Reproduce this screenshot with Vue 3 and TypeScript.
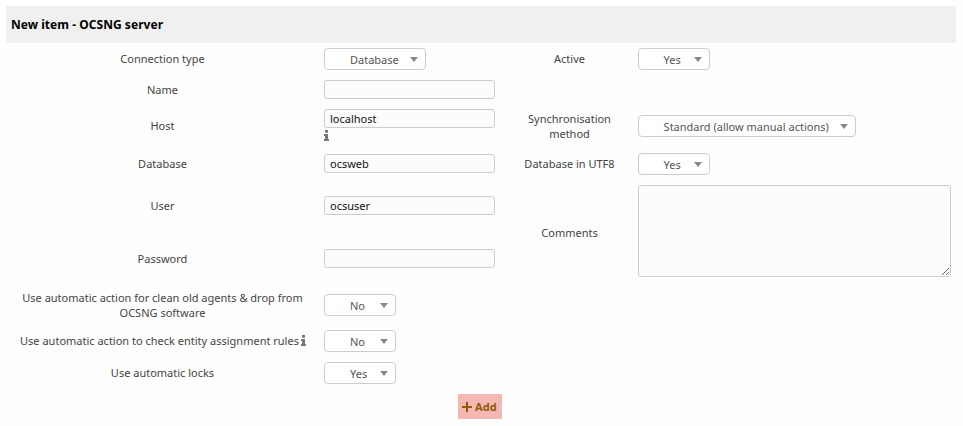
<script setup lang="ts">
import { reactive } from 'vue'

interface Field {
  key: string
  label: string
  kind: 'select' | 'text' | 'area'
  area: string
  size?: 'small' | 'medium' | 'large'
  labelInfo?: boolean
  fieldInfo?: boolean
}

const fields: Field[] = [
  { key: 'connection', label: 'Connection type', kind: 'select', area: 'r1-left', size: 'medium' },
  { key: 'active', label: 'Active', kind: 'select', area: 'r1-right', size: 'small' },
  { key: 'name', label: 'Name', kind: 'text', area: 'r2-left' },
  { key: 'host', label: 'Host', kind: 'text', area: 'r3-left', fieldInfo: true },
  { key: 'sync', label: 'Synchronisation method', kind: 'select', area: 'r3-right', size: 'large' },
  { key: 'database', label: 'Database', kind: 'text', area: 'r4-left' },
  { key: 'utf8', label: 'Database in UTF8', kind: 'select', area: 'r4-right', size: 'small' },
  { key: 'user', label: 'User', kind: 'text', area: 'r5-left' },
  { key: 'comments', label: 'Comments', kind: 'area', area: 'r5-right' },
  { key: 'password', label: 'Password', kind: 'text', area: 'r6-left' },
  { key: 'clean', label: 'Use automatic action for clean old agents & drop from OCSNG software', kind: 'select', area: 'r7-left', size: 'small' },
  { key: 'entity', label: 'Use automatic action to check entity assignment rules', kind: 'select', area: 'r8-left', size: 'small', labelInfo: true },
  { key: 'locks', label: 'Use automatic locks', kind: 'select', area: 'r9-left', size: 'small' },
]

const values = reactive<Record<string, string>>({
  connection: 'Database',
  active: 'Yes',
  name: '',
  host: 'localhost',
  sync: 'Standard (allow manual actions)',
  database: 'ocsweb',
  utf8: 'Yes',
  user: 'ocsuser',
  comments: '',
  password: '',
  clean: 'No',
  entity: 'No',
  locks: 'Yes',
})
</script>

<template>
  <form class="server-form" @submit.prevent>
    <h1 class="title">New item - OCSNG server</h1>
    <div class="fields">
      <div v-for="f in fields" :key="f.key" class="pair" :class="f.area">
        <label class="label">
          <span>{{ f.label }}<svg v-if="f.labelInfo" class="info inline" viewBox="0 0 5 11"><path d="M1 0h3v2.8H1zM0 4h4v5h1v2H0V9h1V6H0z" /></svg></span>
        </label>
        <div class="control">
          <button v-if="f.kind === 'select'" type="button" class="select" :class="f.size">
            <span>{{ values[f.key] }}</span>
            <svg class="arrow" viewBox="0 0 8 5"><path d="M0 0h8L4 5z" /></svg>
          </button>
          <textarea v-else-if="f.kind === 'area'" v-model="values[f.key]" class="comments"></textarea>
          <input v-else v-model="values[f.key]" class="input" type="text" />
          <svg v-if="f.fieldInfo" class="info" viewBox="0 0 5 11"><path d="M1 0h3v2.8H1zM0 4h4v5h1v2H0V9h1V6H0z" /></svg>
        </div>
      </div>
    </div>
    <div class="actions">
      <button type="submit" class="add">
        <svg class="plus" viewBox="0 0 10 10"><path d="M4 0h2v4h4v2H6v4H4V6H0V4h4z" /></svg>
        <span>Add</span>
      </button>
    </div>
  </form>
</template>

<style>
body {
  background: #fefefe;
}
</style>

<style scoped>
.server-form {
  box-sizing: border-box;
  width: 963px;
  height: 426px;
  padding: 6px 7px 0 6px;
  overflow: hidden;
  font: 11px/15px "Noto Sans", sans-serif;
  color: #444;
}
.title {
  box-sizing: border-box;
  height: 37px;
  margin: 0;
  padding: 0 5px;
  background: #f0f0f0;
  color: #000;
  font-size: 12px;
  line-height: 37px;
  font-weight: 700;
  letter-spacing: 0.04px;
}
.fields {
  display: grid;
  grid-template-columns: 500px 1fr;
  grid-template-rows: 32px 29px 44px 32px 52px 53px 40px 32px 32px;
}
.pair {
  display: grid;
  grid-template-columns: 313px 1fr;
  align-items: center;
}
.r1-right, .r3-right, .r4-right, .r5-right {
  grid-template-columns: 127px 1fr;
  grid-column: 2;
}
.r1-left, .r1-right { grid-row: 1; }
.r2-left { grid-row: 2; }
.r3-left, .r3-right { grid-row: 3; }
.r4-left, .r4-right { grid-row: 4; }
.r5-left { grid-row: 5; }
.r5-right { grid-row: 5 / 7; }
.r6-left { grid-row: 6; }
.r7-left { grid-row: 7; }
.r8-left { grid-row: 8; }
.r9-left { grid-row: 9; }
.label {
  padding: 0 5px 1px;
  text-align: center;
}
.control {
  display: flex;
  flex-direction: column;
  align-items: flex-start;
  padding-left: 5px;
}
.select {
  box-sizing: border-box;
  display: flex;
  align-items: center;
  justify-content: space-between;
  height: 22px;
  margin: 0;
  padding: 1px 7px 0 25px;
  border: 1px solid #ccc;
  border-radius: 4px;
  background: #fff;
  color: #555;
  font: inherit;
  white-space: nowrap;
}
.r1-right .select,
.r3-right .select,
.r4-right .select {
  padding-left: 24.6px;
}
.small { width: 72px; }
.medium { width: 102px; }
.large { width: 218px; }
.arrow {
  width: 8px;
  height: 5px;
  margin-bottom: 1px;
  fill: #888;
}
.input {
  box-sizing: border-box;
  width: 171px;
  height: 19px;
  margin: 0 0 1px;
  padding: 0 5px;
  border: 1px solid #ccc;
  border-radius: 3px;
  background: #fcfcfc;
  color: #111;
  font: inherit;
  outline: none;
}
.comments {
  box-sizing: border-box;
  width: 313px;
  height: 92px;
  margin: 0 0 3px;
  padding: 5px;
  border: 1px solid #ccc;
  border-radius: 3px;
  background: #fcfcfc;
  font: inherit;
  outline: none;
}
.info {
  display: block;
  width: 5px;
  height: 11px;
  margin: 1px 0 2px;
  fill: #777;
}
.info.inline {
  display: inline-block;
  margin: 0 0 0 2px;
  vertical-align: -1px;
}
.r8-left .label {
  padding-left: 5.5px;
  padding-right: 4.5px;
}
.actions {
  display: flex;
  justify-content: center;
  padding: 5px 3px 0 0;
}
.add {
  display: flex;
  align-items: center;
  gap: 3.6px;
  height: 25px;
  width: 44px;
  padding: 0 0 0 4px;
  border: 0;
  background: #f5b7b1;
  color: #8f5a0a;
  font: inherit;
  font-weight: 700;
}
.plus {
  width: 10px;
  height: 10px;
  fill: currentColor;
}
</style>
